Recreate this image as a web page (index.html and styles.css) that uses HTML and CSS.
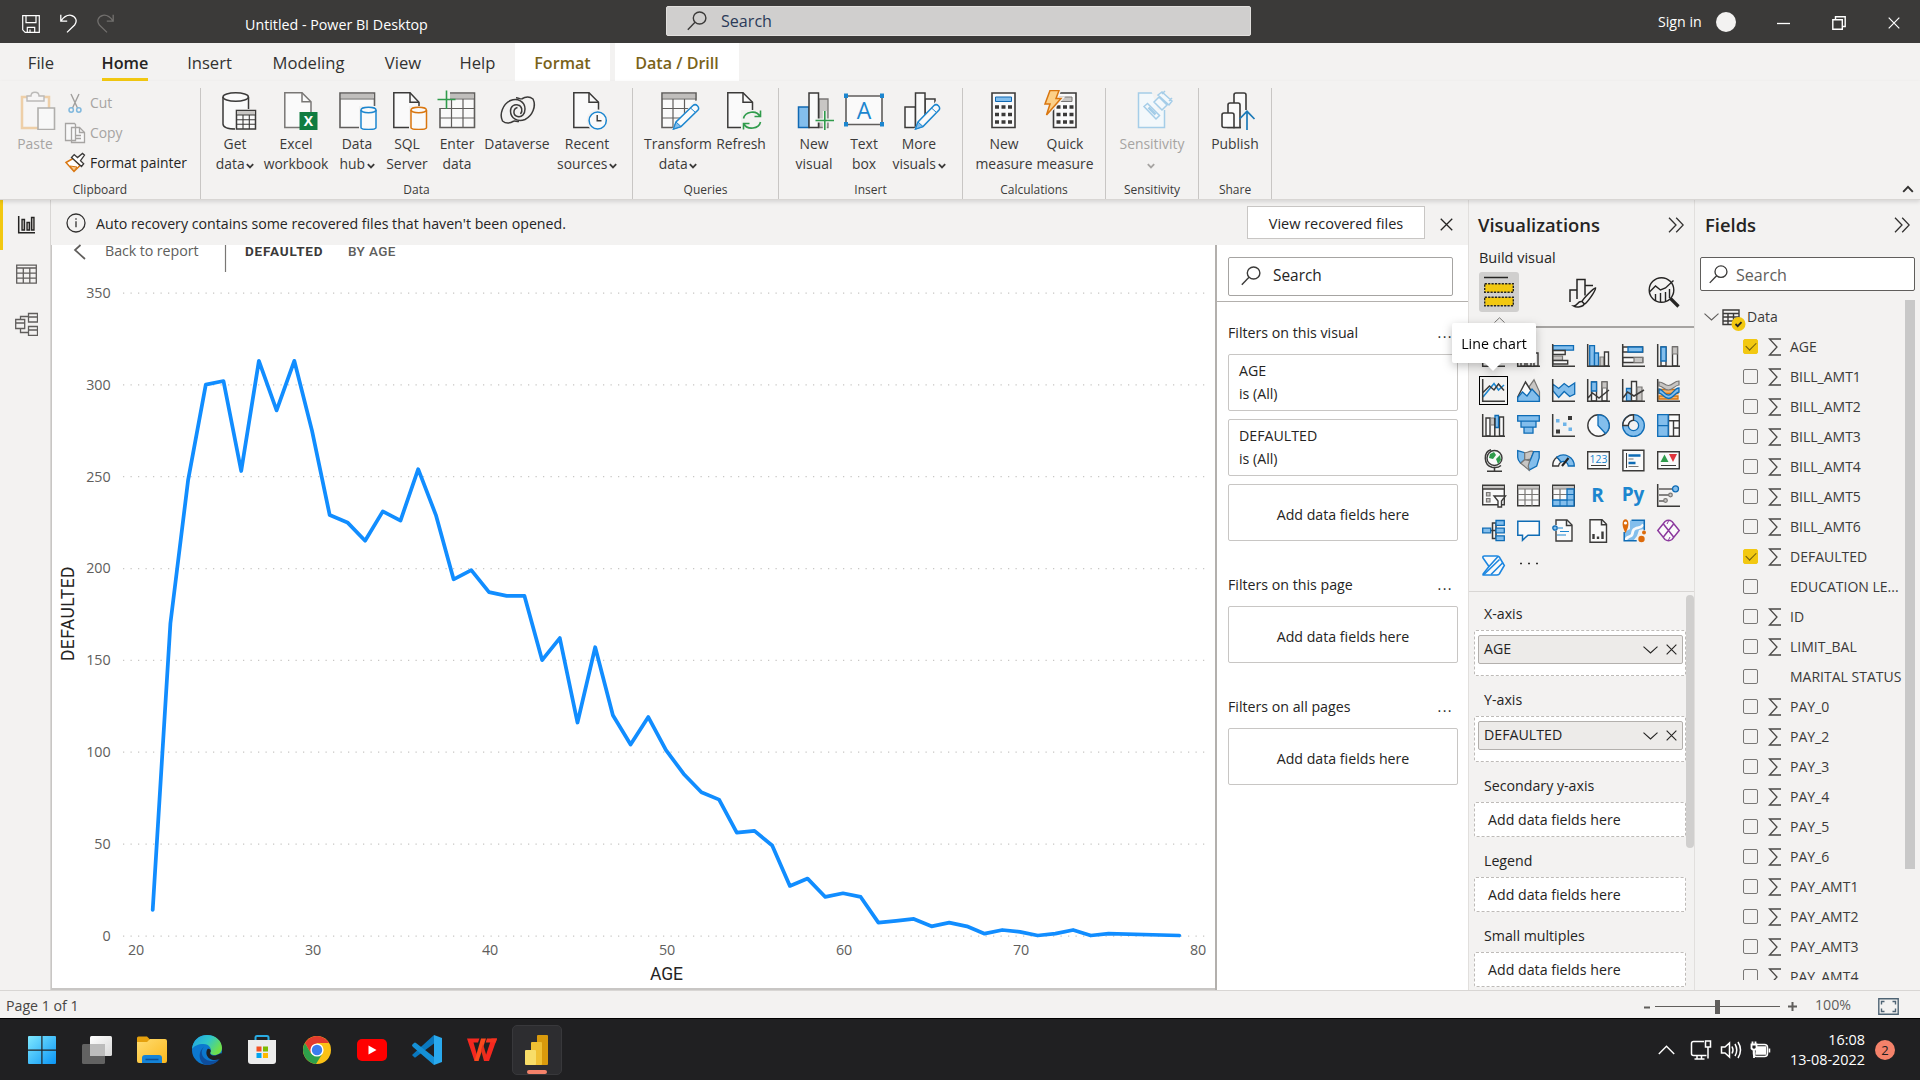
FILE: index.html
```html
<!DOCTYPE html>
<html lang="en">
<head>
<meta charset="utf-8">
<title>Untitled - Power BI Desktop</title>
<link rel="stylesheet" href="styles.css">
</head>
<body>
<svg class="defs" aria-hidden="true">
  <symbol id="sigma" viewBox="0 0 14 18"><path d="M13 1H1.5L9 9 1.5 17H13" fill="none" stroke="#4a4846" stroke-width="1.3"/></symbol>
  <symbol id="lens" viewBox="0 0 20 20"><g fill="none" stroke="#3b3a39" stroke-width="1.4"><ellipse cx="12.6" cy="7" rx="6.3" ry="6"/><path d="M8 11.3.8 18.8"/></g></symbol>
  <symbol id="drop" viewBox="0 0 8 6"><path d="M.8 1.2 4 4.4 7.2 1.2" fill="none" stroke="currentColor" stroke-width="1.8"/></symbol>
  <symbol id="collapse" viewBox="0 0 16 16"><path d="M1 .8 8 8l-7 7.2M8.2.8l7 7.2-7 7.2" fill="none" stroke="#323130" stroke-width="1.3"/></symbol>
  <symbol id="cross" viewBox="0 0 12 12"><path d="M.7.7l10.6 10.6M11.3.7.7 11.3" fill="none" stroke="currentColor" stroke-width="1.2"/></symbol>
  <symbol id="chev" viewBox="0 0 15 8"><path d="M.5.6 7.5 7l7-6.4" fill="none" stroke="currentColor" stroke-width="1.1"/></symbol>
</svg>

<header class="titlebar">
  <div class="quick">
    <svg width="18" height="18" viewBox="0 0 18 18" fill="none" stroke="#fff" stroke-width="1.2"><path d="M.7.7h16.6v16.6H3.2L.7 14.8zM4 .7v7h10v-7M5.3 17.3v-5h7.4v5M8 17v-2.6"/></svg>
    <svg width="17" height="19" viewBox="0 0 17 19" fill="none" stroke="#fff" stroke-width="1.3"><path d="M.8.8v6.400h6.400M1 7C4 2.500 7.500.8 11 1.300c5 .9 6.600 6 3.600 9.700L7 18.400"/></svg>
    <svg width="17" height="19" viewBox="0 0 17 19" fill="none" stroke="#72706e" stroke-width="1.3"><path d="M16.200.8v6.400H9.800M16 7C13 2.500 9.500.8 6 1.300c-5 .9-6.600 6-3.600 9.700L10 18.400"/></svg>
  </div>
  <div class="doc-title">Untitled - Power BI Desktop</div>
  <div class="top-search"><svg width="20" height="20"><use href="#lens"/></svg><span>Search</span></div>
  <div class="account"><span>Sign in</span><i class="avatar"></i></div>
  <div class="window-buttons">
    <svg width="13" height="14" viewBox="0 0 13 14"><path d="M0 7.500h13" stroke="#fff" stroke-width="1.3"/></svg>
    <svg width="14" height="14" viewBox="0 0 14 14" fill="none" stroke="#fff" stroke-width="1.4"><path d="M.8 3.700h9.500v9.500H.8zM3.500 3.500V.8h9.700v9.700h-2.700"/></svg>
    <svg width="12" height="12"><use href="#cross"/></svg>
  </div>
</header>

<nav class="tabs">
  <span>File</span><span class="active"><b>Home</b></span><span>Insert</span><span>Modeling</span><span>View</span><span>Help</span><span class="context">Format</span><i></i><span class="context">Data / Drill</span>
</nav>

<section class="ribbon">
  <div class="group g-clipboard">
    <div class="commands">
      <div class="cmd off w54">
        <svg width="54" height="40" viewBox="8 90 54 40" fill="none"><g opacity=".45"><path d="M22 97h27v31H22z" fill="#fafafa" stroke="#e8a552" stroke-width="2.5"/><path d="M27 101v-5h4c0-5 8-5 8 0h5v5z" fill="#fafafa" stroke="#797775" stroke-width="1.4"/></g><path d="M38 108h16.500v21.500H38z" fill="#f8f8f8" stroke="#b0aeac" stroke-width="1.6"/></svg>
        <span>Paste</span></div>
      <div class="small-cmds">
        <div class="off"><svg width="24" height="24" viewBox="64 91 24 24" fill="none"><path d="M71 94l6.500 14M79 94l-6.500 14" stroke="#a19f9d" stroke-width="1.4"/><circle cx="71.2" cy="110" r="2.2" stroke="#80b8dd" stroke-width="1.5"/><circle cx="78.8" cy="110" r="2.2" stroke="#80b8dd" stroke-width="1.5"/></svg>Cut</div>
        <div class="off"><svg width="24" height="24" viewBox="64 121 24 24" fill="#f8f8f8" stroke="#a6a4a2" stroke-width="1.3"><path d="M65.500 123.500h9l1 1v16h-10zM71.500 127.500h8l5 5v10h-13z"/><path d="M79.500 127.500v5h5M75 135.500h6M75 138.500h6" fill="none"/></svg>Copy</div>
        <div><svg width="24" height="24" viewBox="64 151 24 24" fill="none"><path d="M66 162.500l7-4 7 7-6 6z" fill="#fff" stroke="#d9760f" stroke-width="1.5"/><path d="M70 166l7 1-3 4z" fill="#f7c98f" stroke="#d9760f"/><path d="M71.500 157.500l10 9 2.200-2.800-3.200-3 4-5.500-2-1.800-5 4.200-3.300-3z" fill="#fff" stroke="#3b3a39" stroke-width="1.3"/></svg>Format painter</div>
      </div>
    </div>
    <div class="group-name">Clipboard</div>
  </div>

  <div class="group g-data">
    <div class="commands">
      <div class="cmd w54"><svg width="54" height="40" viewBox="208 90 54 40" fill="#fafafa" stroke="#3b3a39" stroke-width="1.5"><path d="M223 97v27c0 3 5 5 13 5V118h12.500V97"/><ellipse cx="235.7" cy="97" rx="12.7" ry="4.2"/><path d="M235 109h21v21h-21z" fill="#f3f2f1" stroke="none"/><path d="M236.500 110.500h19v18.500h-19z"/><path d="M237 111h18v4h-18z" fill="#c8c6c4" stroke="none"/><path d="M236.500 115h19M236.500 119.700h19M236.500 124.300h19M243 115v14M249.300 115v14" stroke-width="1.1"/></svg><span>Get<br>data <svg class="caret"><use href="#drop"/></svg></span></div>
      <div class="cmd w68"><svg width="68" height="40" viewBox="262 90 68 40"><path d="M284.800 92.800H302l9 9V127.500h-26.200z" fill="#fafafa" stroke="#797775" stroke-width="1.5"/><path d="M302 92.800v9h9" fill="none" stroke="#797775" stroke-width="1.5"/><path d="M299.500 112h18v18h-18z" fill="#107c41"/><text x="308.500" y="126" class="xl">X</text></svg><span>Excel<br>workbook</span></div>
      <div class="cmd w54"><svg width="54" height="40" viewBox="330 90 54 40"><path d="M340 93h34.500v34.500H340z" fill="#fafafa" stroke="#605e5c" stroke-width="1.6"/><path d="M341 94h32.500v4.500H341z" fill="#c0bebc"/><path d="M340 99h34.500" stroke="#605e5c" stroke-width="1.2"/><path d="M359 106h20v24h-20z" fill="#f3f2f1"/><path d="M361 110v17.500c0 2.600 15 2.600 15 0V110" fill="#fafafa" stroke="#1c86cf" stroke-width="1.5"/><ellipse cx="368.5" cy="110" rx="7.5" ry="2.7" fill="#fafafa" stroke="#1c86cf" stroke-width="1.5"/></svg><span>Data<br>hub <svg class="caret"><use href="#drop"/></svg></span></div>
      <div class="cmd w46"><svg width="46" height="40" viewBox="384 90 46 40"><path d="M393.800 92.800H410l9 9.500v25.200h-25.200z" fill="#fafafa" stroke="#3b3a39" stroke-width="1.5"/><path d="M410 92.800v9.500h9" fill="none" stroke="#3b3a39" stroke-width="1.5"/><path d="M409 106h20v24h-20z" fill="#f3f2f1"/><path d="M411 110v17.500c0 2.600 15.500 2.600 15.500 0V110" fill="#fafafa" stroke="#d9760f" stroke-width="1.5"/><ellipse cx="418.7" cy="110" rx="7.7" ry="2.7" fill="#fafafa" stroke="#d9760f" stroke-width="1.5"/></svg><span>SQL<br>Server</span></div>
      <div class="cmd w54"><svg width="54" height="40" viewBox="430 90 54 40"><path d="M440 93h34.500v34.500H440z" fill="#fafafa" stroke="#605e5c" stroke-width="1.6"/><path d="M447 94h27v4.500h-27z" fill="#c0bebc"/><path d="M440 99h34.500M440 108.500h34.500M440 118h34.500M451.500 99v28M463 99v28" fill="none" stroke="#605e5c" stroke-width="1.2"/><path d="M436 90h14v18h-14z" fill="#f3f2f1"/><path d="M437.500 99.500h18M446.500 90.500V109" stroke="#2f9b4b" stroke-width="1.6"/></svg><span>Enter<br>data</span></div>
      <div class="cmd w66"><svg width="66" height="40" viewBox="484 90 66 40" fill="none" stroke="#3b3a39" stroke-width="1.5"><path d="M521.500 99c4-2.500 8.500-2.500 11.500 0 3.500 7-.5 17-8 20.500-7 3-14.500-1-14.500-8.500 0-5 4-7 7.500-6 4 1 5 6 2.500 9"/><path d="M514 121c-4 2.500-8.500 2.500-11.500 0-3.500-7 .5-17 8-20.500 7-3 14.500 1 14.500 8.500 0 5-3 8.500-7.500 7.500-5-1-4.500-8 0-9"/><path d="M521.500 99c-2 0-3-1.300-5.500-1.300M514 121c2 0 3 .8 5 .5"/></svg><span>Dataverse</span></div>
      <div class="cmd w74"><svg width="74" height="40" viewBox="550 90 74 40"><path d="M573.800 92.800H589l9.500 9.500v25.200h-24.700z" fill="#fafafa" stroke="#3b3a39" stroke-width="1.5"/><path d="M589 92.800v9.500h9.500" fill="none" stroke="#3b3a39" stroke-width="1.5"/><circle cx="597.7" cy="120.5" r="11" fill="#f3f2f1"/><circle cx="597.7" cy="120.5" r="8.6" fill="#fafafa" stroke="#1c86cf" stroke-width="1.5"/><path d="M597.200 115v5.800h4.300" fill="none" stroke="#3b3a39" stroke-width="1.4"/></svg><span>Recent<br>sources <svg class="caret"><use href="#drop"/></svg></span></div>
    </div>
    <div class="group-name">Data</div>
  </div>

  <div class="group g-queries">
    <div class="commands">
      <div class="cmd w68"><svg width="68" height="40" viewBox="644 90 68 40"><path d="M662 93h34v34.500h-34z" fill="#fafafa" stroke="#605e5c" stroke-width="1.6"/><path d="M663 94h32v4.500h-32z" fill="#c0bebc"/><path d="M662 99h34M662 108.500h34M662 118h34M673 99v28M684.500 99v28" fill="none" stroke="#605e5c" stroke-width="1.2"/><path d="M697 130h-26l23-29 6-1v20z" fill="#f3f2f1"/><path d="M673.500 129l2.500-7 17-16.500c3-2.500 7 1.500 5 4.500l-17 16.500z" fill="#fafafa" stroke="#1c86cf" stroke-width="1.5"/><path d="M673.500 129l2.500-7 5 4.500z" fill="#83beec" stroke="#1c86cf"/><path d="M690.500 108l5 4.500" stroke="#1c86cf"/></svg><span>Transform<br>data <svg class="caret"><use href="#drop"/></svg></span></div>
      <div class="cmd w58"><svg width="58" height="40" viewBox="712 90 58 40"><path d="M727.800 92.800H743l9.500 9.500v25.200h-24.700z" fill="#fafafa" stroke="#3b3a39" stroke-width="1.5"/><path d="M743 92.800v9.500h9.500" fill="none" stroke="#3b3a39" stroke-width="1.5"/><path d="M741 110h22v20h-22z" fill="#f3f2f1"/><path d="M743.500 118.500c1.500-7 13-9 16.500-2M760.500 110.500v6h-6M760.500 122c-1.500 7-13 8.500-16.500 2M743.500 129.500v-6h6" fill="none" stroke="#2f9b4b" stroke-width="1.6"/></svg><span>Refresh</span></div>
    </div>
    <div class="group-name">Queries</div>
  </div>

  <div class="group g-insert">
    <div class="commands">
      <div class="cmd w50"><svg width="50" height="40" viewBox="789 90 50 40"><path d="M798.500 107h10.500v20.500h-10.500z" fill="#83beec" stroke="#1069b3" stroke-width="1.5"/><path d="M819 99h9v28.500h-9z" fill="#c8c6c4" stroke="#797775" stroke-width="1.3"/><path d="M809 93h9.500v34.500H809z" fill="#fafafa" stroke="#3b3a39" stroke-width="1.5"/><path d="M815.500 120.500h18.500M824.800 111v19" stroke="#f3f2f1" stroke-width="4"/><path d="M815.500 120.500h18.500M824.800 111v19" stroke="#2f9b4b" stroke-width="1.6"/></svg><span>New<br>visual</span></div>
      <div class="cmd w50"><svg width="50" height="40" viewBox="839 90 50 40"><path d="M846 96h36v28.500h-36z" fill="#fafafa" stroke="#605e5c" stroke-width="1.6"/><path d="M844 93.500h4v4.500h-4zM880 93.500h4v4.500h-4zM844 122h4v4.500h-4zM880 122h4v4.500h-4z" fill="#1c86cf"/><text x="864" y="118.500" class="tb">A</text></svg><span>Text<br>box</span></div>
      <div class="cmd w60"><svg width="60" height="40" viewBox="889 90 60 40"><path d="M905 107h10.500v20.500H905zM925 99h10v28.500h-10z" fill="#fafafa" stroke="#3b3a39" stroke-width="1.5"/><path d="M915.500 93h9.500v34.500h-9.500z" fill="#fafafa" stroke="#3b3a39" stroke-width="1.5"/><path d="M937 130h-24l23-29 5-1v20z" fill="#f3f2f1"/><path d="M915.500 129l2.500-7 16-16.500c3-2.500 7 1.500 5 4.500l-16 16.500z" fill="#fafafa" stroke="#1c86cf" stroke-width="1.5"/><path d="M915.500 129l2.500-7 5 4.500z" fill="#83beec" stroke="#1c86cf"/><path d="M931.500 108l5 4.500" stroke="#1c86cf"/></svg><span>More<br>visuals <svg class="caret"><use href="#drop"/></svg></span></div>
    </div>
    <div class="group-name">Insert</div>
  </div>

  <div class="group g-calc">
    <div class="commands">
      <div class="cmd w62"><svg width="62" height="40" viewBox="973 90 62 40"><path d="M992 93h23v34.500h-23z" fill="#fafafa" stroke="#3b3a39" stroke-width="1.6"/><path d="M995.500 97h16v4.500h-16z" fill="#83beec" stroke="#1069b3"/><path d="M995 107h17M995 114.500h17M995 122h17" stroke="#3b3a39" stroke-width="3.5" stroke-dasharray="4 2.5"/></svg><span>New<br>measure</span></div>
      <div class="cmd w60"><svg width="60" height="40" viewBox="1035 90 60 40"><path d="M1053.500 93h22.500v34.500h-22.500z" fill="#fafafa" stroke="#3b3a39" stroke-width="1.6"/><path d="M1058 97h14v4.500h-14z" fill="#c8c6c4" stroke="#797775"/><path d="M1056.500 107h17M1056.500 114.500h17M1056.500 122h17" stroke="#3b3a39" stroke-width="3.5" stroke-dasharray="4 2.5"/><path d="M1050 90.500h9l-3 8h5l-14.500 16.500 3.500-11h-5z" fill="#fcd998" stroke="#f3f2f1" stroke-width="4"/><path d="M1050 90.500h9l-3 8h5l-14.500 16.500 3.500-11h-5z" fill="#fcd088" stroke="#d9760f" stroke-width="1.5"/></svg><span>Quick<br>measure</span></div>
    </div>
    <div class="group-name">Calculations</div>
  </div>

  <div class="group g-sens">
    <div class="commands">
      <div class="cmd off w68"><svg width="68" height="40" viewBox="1118 90 68 40" fill="#f3f8fb" stroke="#a5cde8" stroke-width="1.5"><path d="M1138.500 93h26v34.500h-26z"/><path d="M1151 90h20v20h-13z" fill="#f3f2f1" stroke="none"/><path d="M1154 102l5-5 8 8-5 5zM1158 95l4-3 10 9-3 4zM1162 94l3-3M1169 101l3-3"/><path d="M1144 106.500l3.500-3 12 12-3.500 3.500z"/><path d="M1148.500 107.500l7 7" stroke-width="2.5"/></svg><span>Sensitivity<br><svg class="caret"><use href="#drop"/></svg></span></div>
    </div>
    <div class="group-name">Sensitivity</div>
  </div>

  <div class="group g-share">
    <div class="commands">
      <div class="cmd w60"><svg width="60" height="40" viewBox="1205 90 60 40" fill="#fafafa" stroke="#3b3a39" stroke-width="1.6"><path d="M1234 103v-8q0-2 2-2h8q2 0 2 2v32.500h-12z"/><path d="M1228 113v-8q0-2 2-2h8q2 0 2 2v22.500h-12z"/><path d="M1222 125v-10q0-2 2-2h8q2 0 2 2v12.500h-10q-2 0-2-2z"/><path d="M1241 110h12v20h-12z" fill="#f3f2f1" stroke="none"/><path d="M1247 130v-18.500M1239.500 119l7.500-7.700 7.500 7.700" fill="none" stroke="#1c7ab8" stroke-width="1.7"/></svg><span>Publish</span></div>
    </div>
    <div class="group-name">Share</div>
  </div>
  <svg class="ribbon-toggle" width="12" height="8" viewBox="0 0 12 8"><path d="M1.200 6.800 6 1.800l4.800 5" fill="none" stroke="#323130" stroke-width="1.9"/></svg>
</section>

<main class="work">
  <aside class="rail">
    <div class="rail-item current"><svg width="24" height="24" viewBox="14 213 24 24" fill="none" stroke="#252423" stroke-width="1.5"><path d="M18.700 216v16.800H35"/><path d="M22 219.500h2.500v10.500H22zM27 222.500h2.500v7.500H27zM31.500 217.500h2.500v12.500h-2.500z" stroke-width="1.3" fill="#b3b0ad"/></svg></div>
    <div class="rail-item"><svg width="24" height="24" viewBox="14 262.500 24 24" fill="none" stroke="#605e5c" stroke-width="1.3"><path d="M16.700 264.700h19.600v18H16.700zM16.700 267.500h19.600M16.700 272.700h19.600M16.700 277.700h19.600M23.300 267.500v15M29.800 267.500v15"/></svg></div>
    <div class="rail-item"><svg width="24" height="24" viewBox="14 312 24 24" fill="none" stroke="#605e5c" stroke-width="1.3"><path d="M15.700 319.500h9v9h-9zM15.700 323h9M28.500 313.500h9v8.500h-9zM28.500 317h9M28.500 326.500h9v9h-9zM28.500 330h9M20.500 319.500v-3h8M20.500 328.500v4h8"/></svg></div>
  </aside>

  <section class="center">
    <div class="notice">
      <svg width="20" height="20" viewBox="0 0 20 20" fill="none" stroke="#323130" stroke-width="1.3"><circle cx="10" cy="10" r="9"/><path d="M10 8.200v6M10 5.200v1.600"/></svg>
      <p>Auto recovery contains some recovered files that haven't been opened.</p>
      <button>View recovered files</button>
      <svg class="notice-close" width="13" height="13"><use href="#cross"/></svg>
    </div>
    <div class="stage">
      <div class="canvas">
        <svg class="chart" width="1163" height="743" viewBox="52 245 1163 743">
          <path d="M80.500 245l-5.500 5 10 9" fill="none" stroke="#605e5c" stroke-width="1.7"/>
          <text x="105" y="256" class="back" textLength="93.5">Back to report</text>
          <path d="M225.500 245v27" stroke="#797775" stroke-width="1.2"/>
          <text x="245" y="255.5" class="head strong" textLength="77.5">DEFAULTED</text>
          <text x="348" y="255.5" class="head" textLength="47.5">BY AGE</text>
          <g class="grid"><path d="M123 293h1085M123 384.900h1085M123 476.700h1085M123 568.600h1085M123 660.400h1085M123 752.200h1085M123 844.100h1085M123 936h1085"/></g>
          <g class="tick end">
            <text x="110.5" y="298">350</text><text x="110.5" y="389.8">300</text><text x="110.5" y="481.5">250</text><text x="110.5" y="573.3">200</text><text x="110.5" y="665">150</text><text x="110.5" y="757">100</text><text x="110.5" y="849">50</text><text x="110.5" y="940.5">0</text>
          </g>
          <g class="tick mid">
            <text x="136" y="955">20</text><text x="313" y="955">30</text><text x="490" y="955">40</text><text x="667" y="955">50</text><text x="844" y="955">60</text><text x="1021" y="955">70</text><text x="1198" y="955">80</text>
          </g>
          <text x="650" y="980" class="axis" textLength="33">AGE</text>
          <text transform="translate(74 661) rotate(-90)" class="axis" textLength="94.5">DEFAULTED</text>
          <g transform="translate(-219 935.500) scale(17.700 -1.836)"><polyline class="series" points="21,14 22,170 23,248 24,300 25,302 26,253 27,313 28,286 29,313 30,275 31,229 32,225 33,215 34,231 35,226 36,254 37,229 38,194 39,199 40,187 41,185 42,185 43,150 44,162 45,116 46,157 47,120 48,104 49,119 50,101 51,88 52,78 53,74 54,56 55,57 56,49 57,27 58,31 59,21 60,23 61,21 62,7 63,8 64,9 65,5 66,7 67,5 68,1 69,3 70,2 71,0 72,1 73,3 74,0 75,1 79,0"/></g>
        </svg>
      </div>
      <aside class="filters">
        <div class="filter-top"><div class="filter-search"><svg width="20" height="20"><use href="#lens"/></svg><span>Search</span></div></div>
        <section><h4>Filters on this visual<i>...</i></h4>
          <div class="card">AGE<br>is (All)</div><div class="card">DEFAULTED<br>is (All)</div><div class="card empty">Add data fields here</div></section>
        <section><h4>Filters on this page<i>...</i></h4><div class="card empty">Add data fields here</div></section>
        <section><h4>Filters on all pages<i>...</i></h4><div class="card empty">Add data fields here</div></section>
      </aside>
    </div>
  </section>

  <aside class="pane viz">
    <div class="pane-head"><h3>Visualizations</h3><svg width="16" height="16"><use href="#collapse"/></svg></div>
    <div class="build">Build visual</div>
    <div class="modes">
      <div class="mode on"><svg width="40" height="40" viewBox="0 0 40 40"><path d="M5 5.500h24" stroke="#252423" stroke-width="1.5"/><path d="M5.700 11.700h28.600v8.600H5.700zM5.700 25.200h28.600v8.600H5.700z" fill="#f2c811" stroke="#252423" stroke-width="1.4" stroke-dasharray="2.2 1.2"/></svg><svg class="up" width="11" height="6" viewBox="0 0 11 6"><path d="M.5 5.500l5-4.700 5 4.700" fill="none" stroke="#797775"/></svg></div>
      <div class="mode"><svg width="40" height="40" viewBox="1562 272 40 40" fill="none" stroke="#252423" stroke-width="1.5"><path d="M1570 302v-12h6.500M1577 299v-19.500h8v16M1585 285.500h8"/><path d="M1595.500 288c-2 0-13 11.500-13.500 13.500l2.500 2.500c2.500-1 11.500-13.500 11-16zM1581.500 301.500c-4-.5-4 4.500-8 4.500 3 2 10 1 11-2.500"/></svg></div>
      <div class="mode"><svg width="40" height="40" viewBox="1644 272 40 40" fill="none" stroke="#252423" stroke-width="1.4"><circle cx="1661.5" cy="290" r="12.3"/><path d="M1649.500 292l6-6 5 4 5-2 8-7.500M1655.500 301v-7M1660.500 302v-9M1665.500 301v-9M1669.500 298v-9"/><path d="M1670.500 298.500l8 8" stroke-width="3.2"/></svg></div>
    </div>
    <div class="gallery">
      <svg viewBox="0 0 23 23"><path class="ax" d="M.7 0v22.300H23"/><path class="b" d="M1.500 2h12v4h-12z"/></svg>
      <svg viewBox="0 0 23 23"><path class="ax" d="M.7 0v22.300H23"/><path class="w" d="M4 12h4v10H4zM10 6h4v16h-4zM17 9h4v13h-4z"/></svg>
      <svg viewBox="0 0 23 23"><path class="b" d="M.7 1.700h20.800v4.500H.7z"/><path class="w" d="M.7 6.500h12.500v4H.7z"/><path class="g" d="M.7 12h9.800v4.300H.7z"/><path class="w" d="M.7 16.500h15v3.500H.7z"/><path class="ax" d="M.7 0v22.300H23"/></svg>
      <svg viewBox="0 0 23 23"><path class="b" d="M2.700 1.700h4.800v20.500H2.700z"/><path class="b" d="M7.500 9h4v13h-4z"/><path class="g" d="M13 13h4v9h-4z"/><path class="w" d="M17.500 8h4v14h-4z"/><path class="ax" d="M.7 0v22.300H23"/></svg>
      <svg viewBox="0 0 23 23"><path class="w" d="M.7 3h20v5h-20zM.7 13.500h20v5h-20z"/><path class="b" d="M6 3h14.500v5H6z"/><path class="g" d="M12 13.500h8.700v5H12z"/><path class="ax" d="M.7 0v22.300H23"/></svg>
      <svg viewBox="0 0 23 23"><path class="w" d="M4 3h5v19H4zM15.500 3h5v19h-5z"/><path class="b" d="M4 3h5v14H4z"/><path class="g" d="M15.500 3h5v7h-5z"/><path class="ax" d="M.7 0v22.300H23"/></svg>

      <svg class="picked" viewBox="0 0 23 23"><path d="M1 18l11-13.500 4.500 6.500 5.500-5" fill="none" stroke="#1c86cf" stroke-width="1.6"/><path class="ax" d="M1 13.500l6.500-6.500 4.500 4 4.500-6 5.500 6.500M.7 0v22.300H23"/></svg>
      <svg viewBox="0 0 23 23"><path class="g" d="M9 12 17 .8l5.500 12v9.500H15z"/><path class="w" d="M.7 18 8.500 3l7 11-7 8.300H.7z"/><path class="b" d="M.7 22.300V18.500l4.800-5.500 4.500 4 5-7 7.300 8v4.300z"/></svg>
      <svg viewBox="0 0 23 23"><path class="b" d="M.7 5l6 4.500 5.500-5 4.500 3.500 6-4v11l-5 2.500-5.500-5-5.500 6-6-7z"/><path class="ax" d="M.7 0v22.300H23"/></svg>
      <svg viewBox="0 0 23 23"><path class="w" d="M4.500 3h5v19h-5zM15 3h5v19h-5z"/><path class="b" d="M4.500 3h5v9h-5z"/><path class="g" d="M15 3h5v6h-5z"/><path class="ax" d="M1 19l4.500-5 6.500 5 10-8M.7 0v22.300H23"/></svg>
      <svg viewBox="0 0 23 23"><path class="b" d="M4.500 9.500h5V22h-5z"/><path class="w" d="M9.500 2.500h5V22h-5z"/><path class="g" d="M15 8h5v14h-5z"/><path class="ax" d="M1 19l4.500-6 6.500 4 10-6M.7 0v22.300H23"/></svg>
      <svg viewBox="0 0 23 23"><path d="M2 10.500h19v4H2zM2 17h19v3H2z" fill="#f3b36e" stroke="#d9760f" stroke-width="1.3"/><path class="g" d="M2 3c5 0 5 3.500 9.500 3.500S17 2 22 2v4c-4 0-6 5-10.500 5S6 7 2 7z"/><path class="b" d="M2 10c4 0 5 6 9.500 6S17 9 22 9v4c-3 0-6 6.500-10.500 6.500S5 14 2 14z"/><path class="ax" d="M.7 0v22.300H23"/></svg>

      <svg viewBox="0 0 23 23"><path class="w" d="M4 4h4v18H4zM17.500 3h4v19h-4z"/><path class="g" d="M8.500 4h4v7h-4z"/><path class="b" d="M13 1.500h3.500v12H13z"/><path class="ax" d="M.7 0v22.300H23M12.800 4v18"/></svg>
      <svg viewBox="0 0 23 23"><path class="b" d="M.7 1.700h21.600v5.500H.7zM4 7.200h15v6H4zM7 13.200h9v6H7z"/></svg>
      <svg viewBox="0 0 23 23"><path d="M16 2h4v4h-4zM4 15.500h4v4H4z" fill="#3b3a39"/><path d="M4 5h3.500v3.500H4zM11 8.500h3.500V12H11zM16.500 13.500H20V17h-3.500z" fill="#6db3e8"/><path class="ax" d="M.7 0v22.300H23"/></svg>
      <svg viewBox="0 0 23 23"><circle class="w" cx="11.5" cy="11.5" r="10.7"/><path class="b" d="M11 .8v10.700l7.500 8A10.700 10.700 0 0 0 11 .8z"/></svg>
      <svg viewBox="0 0 23 23"><circle cx="11.5" cy="11.5" r="8" fill="none" stroke="#0f6cb5" stroke-width="7"/><circle cx="11.5" cy="11.5" r="8" fill="none" stroke="#83beec" stroke-width="4.4"/><path class="w" d="M11.500.8v5.500a5.200 5.200 0 0 0-5.200 5.200H.8A10.700 10.700 0 0 1 11.500.8z"/></svg>
      <svg viewBox="0 0 23 23"><path class="w" d="M11.500.7h10.800v6H11.500zM11.500 6.700h5v15.500h-5zM16.500 6.700h5.800V14h-5.800zM16.500 14h5.800v8.300h-5.800z"/><path class="b" d="M.7.7h10.500v11H.7zM.7 11.700h10.500v10.600H.7z"/></svg>

      <svg viewBox="0 0 23 23"><circle class="w" cx="12.5" cy="9" r="7.5"/><path d="M8 5l4-2 2 3-3 4-4-1zM14 10l4-4 1 5-3 4z" fill="#2f9b4b"/><path class="ax" d="M9 .8C1 3 1.500 16 10 18.200c4 .8 7 0 9-1.700M12.500 19v3.200M5 22.300h15"/></svg>
      <svg viewBox="0 0 23 23"><path class="b" d="M.7 1.700l7 2v7l-4 3.500c-2-2-3-3-3-6z"/><path class="g" d="M7.700 3.700c3 .5 5-3 9-1l-3 7.500-6 1z"/><path class="b" d="M16.700 2.700h5.500V9l-2.500 8-7.500 4-2-4 3.500-6.800z"/><path class="g" d="M3.700 14.200l4-3.500 5 1-1.500 5.500 1 4z"/></svg>
      <svg viewBox="0 0 23 23"><path class="w" d="M.7 17A11 11 0 0 1 5 8l4 5a6 6 0 0 0-2.500 4z"/><path class="b" d="M5 8a11 11 0 0 1 17.300 9h-6a5 5 0 0 0-7.300-4z"/><path d="M10 17l6.500-8" stroke="#252423" stroke-width="2.2"/></svg>
      <svg viewBox="0 0 23 23"><path class="w" d="M.7 2.700h21.600v17H.7z"/><text x="11.5" y="14" class="n123">123</text><path class="ax thin" d="M4 16.500h15"/></svg>
      <svg viewBox="0 0 23 23"><path class="w" d="M.9 1.200h21v20.600h-21z"/><path d="M4.500 4v15" stroke="#3b3a39"/><path d="M6.500 6.500h12M6.500 14h7" stroke="#0f6cb5" stroke-width="2.4"/><path d="M6.500 10h5M6.500 17.500h10" stroke="#797775" stroke-width="1.2"/></svg>
      <svg viewBox="0 0 23 23"><path class="w" d="M.7 2.700h21.600v17H.7z"/><path d="M3.500 13 7.500 5.500l4 7.500z" fill="#2f9b4b"/><path d="M12 5h8l-4 8z" fill="#e0343c"/><path class="ax thin" d="M4 16.500h15"/></svg>

      <svg viewBox="0 0 23 23"><path class="w" d="M.7 1.200h21.600v19.600H.7z"/><path d="M1.500 2h20v2.800h-20z" fill="#c8c6c4"/><path class="g" d="M4.500 8.500h3.500V12H4.500zM4.500 14.500h3.500V18H4.500z"/><path class="ax" d="M.7 5h21.600"/><path class="w" d="M12 12h11.500l-4 5v6h-3.500v-6z"/></svg>
      <svg viewBox="0 0 23 23"><path class="w" d="M.7 1.200h21.600v20.600H.7z"/><path d="M1.500 2h20v2.800h-20z" fill="#c8c6c4"/><path class="th" d="M.7 5h21.600M.7 10.500h21.600M.7 16h21.600M8 5v17M15 5v17"/></svg>
      <svg viewBox="0 0 23 23"><path class="w" d="M.7 1.200h21.600v20.600H.7z"/><path d="M1.500 2h20v2.800h-20z" fill="#c8c6c4"/><path class="th" d="M.7 5h21.600M.7 10.500h21.600M8 5v17"/><path class="b" d="M15 5h7v17H.7v-6H15z"/><path d="M15 10.500h7M15 16h7M8 16v6M15 16v6" stroke="#0f6cb5"/></svg>
      <svg viewBox="0 0 23 23"><text x="10.5" y="18" class="lang">R</text></svg>
      <svg viewBox="0 0 23 23"><text x="11" y="16.500" class="lang">Py</text></svg>
      <svg viewBox="0 0 23 23"><path d="M2 5h14M2 11h10M2 17h5" stroke="#605e5c" stroke-width="1.4"/><circle class="b" cx="18.5" cy="4.8" r="3"/><circle class="g" cx="13.5" cy="11" r="1.8"/><circle class="g" cx="8.5" cy="16.5" r="1.8"/><path class="ax" d="M.7 0v22.300H23"/></svg>

      <svg viewBox="0 0 23 23"><path class="ax" d="M8 11.500h6M14 4v15.500M10.500 11.500V4h4M10.500 11.500v8h4"/><path class="b" d="M.7 9.200h8v4.600h-8zM14 1.500h8.300v4.800H14zM14 9.200h8.300v4.600H14zM14 16.800h8.300v4.800H14z"/></svg>
      <svg viewBox="0 0 23 23"><path d="M.8 2.200h21.500v14H11l-5.500 5v-5H.8z" fill="#fafafa" stroke="#0f6cb5" stroke-width="1.5"/></svg>
      <svg viewBox="0 0 23 23"><path class="w" d="M4 6V1h11l5 5v16H4V12"/><path class="ax" d="M14.500 1v5.500H20"/><circle class="b" cx="3" cy="9" r="2.200"/><path d="M6 9h5M8 12.500h9M5 16h9" stroke="#1c86cf" stroke-width="1.2"/></svg>
      <svg viewBox="0 0 23 23"><path class="w" d="M3 .8h12l4.500 4.500v18H3z"/><path class="ax" d="M14.500.8v5h5"/><path d="M6.500 15v5M11 17.500V20M15.500 12.500V20" stroke="#3b3a39" stroke-width="2.4"/></svg>
      <svg viewBox="0 0 23 23"><path d="M8 1.500h14V10l-5 1-2 6-4 5H2.500v-9L8 10z" fill="#83beec"/><path d="M3.500 22c.5-5 4-3.500 6-5.500s0-6 4-7c3-1 5 0 8-4" fill="none" stroke="#fafafa" stroke-width="2.8"/><path d="M2.200 13v8.800h12.500M9.500 1.200h12.800v10" fill="none" stroke="#0f6cb5" stroke-width="1.5"/><path d="M3.500 12.500C-4-3 11-3 3.500 12.500z" fill="#dd6b0c" stroke="#dd6b0c" stroke-width="1.5"/><circle cx="3.5" cy="4" r="1.6" fill="#fff"/><circle cx="19.5" cy="20" r="3.2" fill="#dd6b0c"/><circle cx="22" cy="13.5" r="2" fill="#dd6b0c"/></svg>
      <svg viewBox="0 0 23 23" fill="#fafafa" stroke="#8c3a9e" stroke-width="1.5"><path d="M.8 11.500 8 2.500q3.500-2.500 7 0l7.200 9L15 20.500q-3.500 2.500-7 0zM6 4.500l11 14M17 4.500l-11 14"/><path d="M11.500 2l-1.500 3M11.500 21l1.500-3" stroke-width="1"/></svg>

      <svg viewBox="0 0 23 23" fill="#fafafa" stroke="#1c86e0" stroke-width="1.6"><path d="M.8 3q0-1 1.500-1h12.500q1.500 0 2.500 1l5 8.500-5 8.500q-1 1-2.500 1H1.500q-1 0 0-1.500L7 12.500 1 4z"/><path d="M7 12.500 16 2.500M2 20.500l15.500-15M9 20.500l12-12"/></svg>
      <svg viewBox="0 0 23 23"><path d="M3 9.500h2M11 9.500h2M19 9.500h2" stroke="#323130" stroke-width="1.6"/></svg>
    </div>
    <div class="wells">
      <div class="well-list">
        <label>X-axis</label>
        <div class="well filled"><div class="chip"><span>AGE</span><svg width="15" height="8"><use href="#chev"/></svg><svg width="11" height="11"><use href="#cross"/></svg></div></div>
        <label>Y-axis</label>
        <div class="well filled"><div class="chip"><span>DEFAULTED</span><svg width="15" height="8"><use href="#chev"/></svg><svg width="11" height="11"><use href="#cross"/></svg></div></div>
        <label>Secondary y-axis</label><div class="well">Add data fields here</div>
        <label>Legend</label><div class="well">Add data fields here</div>
        <label>Small multiples</label><div class="well">Add data fields here</div>
      </div>
      <div class="well-scroll"></div>
    </div>
    <div class="tooltip">Line chart</div>
  </aside>

  <aside class="pane fields">
    <div class="pane-head"><h3>Fields</h3><svg width="16" height="16"><use href="#collapse"/></svg></div>
    <div class="field-search"><svg width="19" height="19"><use href="#lens"/></svg><span>Search</span></div>
    <div class="tree-wrap">
      <ul class="tree">
        <li class="table"><svg width="15" height="8"><use href="#chev"/></svg><svg width="26" height="26" viewBox="1720 303 26 26"><path d="M1723 309h16v14.500h-16zM1723 312.500h16M1723 316h16M1723 320h16M1728 312v11.500M1733.500 312v11.500" fill="none" stroke="#3b3a39" stroke-width="1.4"/><circle cx="1738.5" cy="323" r="7" fill="#f2c811"/><path d="M1735.500 323l2.200 2.200 3.800-4" fill="none" stroke="#252423" stroke-width="1.8"/></svg>Data</li>
        <li><i class="box checked"></i><svg><use href="#sigma"/></svg>AGE</li>
        <li><i class="box"></i><svg><use href="#sigma"/></svg>BILL_AMT1</li>
        <li><i class="box"></i><svg><use href="#sigma"/></svg>BILL_AMT2</li>
        <li><i class="box"></i><svg><use href="#sigma"/></svg>BILL_AMT3</li>
        <li><i class="box"></i><svg><use href="#sigma"/></svg>BILL_AMT4</li>
        <li><i class="box"></i><svg><use href="#sigma"/></svg>BILL_AMT5</li>
        <li><i class="box"></i><svg><use href="#sigma"/></svg>BILL_AMT6</li>
        <li><i class="box checked"></i><svg><use href="#sigma"/></svg>DEFAULTED</li>
        <li><i class="box"></i><svg></svg>EDUCATION LE...</li>
        <li><i class="box"></i><svg><use href="#sigma"/></svg>ID</li>
        <li><i class="box"></i><svg><use href="#sigma"/></svg>LIMIT_BAL</li>
        <li><i class="box"></i><svg></svg>MARITAL STATUS</li>
        <li><i class="box"></i><svg><use href="#sigma"/></svg>PAY_0</li>
        <li><i class="box"></i><svg><use href="#sigma"/></svg>PAY_2</li>
        <li><i class="box"></i><svg><use href="#sigma"/></svg>PAY_3</li>
        <li><i class="box"></i><svg><use href="#sigma"/></svg>PAY_4</li>
        <li><i class="box"></i><svg><use href="#sigma"/></svg>PAY_5</li>
        <li><i class="box"></i><svg><use href="#sigma"/></svg>PAY_6</li>
        <li><i class="box"></i><svg><use href="#sigma"/></svg>PAY_AMT1</li>
        <li><i class="box"></i><svg><use href="#sigma"/></svg>PAY_AMT2</li>
        <li><i class="box"></i><svg><use href="#sigma"/></svg>PAY_AMT3</li>
        <li><i class="box"></i><svg><use href="#sigma"/></svg>PAY_AMT4</li>
      </ul>
      <div class="tree-scroll"></div>
    </div>
  </aside>
</main>

<footer class="status">
  <span class="page-no">Page 1 of 1</span>
  <svg width="156" height="28" viewBox="1642 990 156 28"><path d="M1644 1006.500h6M1788 1005.500h9M1792.500 1001v9" stroke="#605e5c" stroke-width="2"/><path d="M1655 1005.500h125" stroke="#605e5c"/><path d="M1715 999h5v14h-5z" fill="#605e5c"/></svg>
  <span class="percent">100%</span>
  <svg width="21" height="17" viewBox="0 0 21 17" fill="none" stroke="#4f6474" stroke-width="1.4"><path d="M.8.8h19.400v15.400H.8z"/><path d="M3.500 6.500v-3h3M14.500 3.500h3v3M17.500 10.500v3h-3M6.500 13.500h-3v-3"/></svg>
</footer>

<footer class="taskbar">
  <div class="apps">
    <div><svg width="30" height="30" viewBox="0 0 30 30"><defs><linearGradient id="win" x1="0" y1="0" x2="1" y2="1"><stop offset="0" stop-color="#7fe9ff"/><stop offset="1" stop-color="#0a95f5"/></linearGradient></defs><path d="M2 1h12.300v13.500H1V2q0-1 1-1zM15.500 1H28q1 0 1 1v12.500H15.500zM1 15.700h13.300V29H2q-1 0-1-1zM15.500 15.700H29V28q0 1-1 1H15.500z" fill="url(#win)"/></svg></div>
    <div><svg width="30" height="30" viewBox="0 0 30 30"><defs><linearGradient id="tv" x1="0" y1="0" x2="1" y2="1"><stop offset="0" stop-color="#fff"/><stop offset="1" stop-color="#d8d8d8"/></linearGradient></defs><rect x="0" y="9" width="23" height="20" rx="1.5" fill="#626262"/><rect x="8" y="1" width="22" height="20" rx="1.5" fill="url(#tv)"/><path d="M8 9h15v12H8z" fill="#bcbcbc"/></svg></div>
    <div><svg width="30" height="30" viewBox="0 0 30 30"><defs><linearGradient id="fo" x1="0" y1="0" x2="1" y2="1"><stop offset="0" stop-color="#ffdc70"/><stop offset="1" stop-color="#fbb81d"/></linearGradient></defs><path d="M0 3q0-1.500 1.500-1.500h8.500l3 3V9H0z" fill="#e5a00d"/><path d="M0 7h10l3-3h15q2 0 2 2v20q0 2-2 2H2q-2 0-2-2z" fill="url(#fo)"/><path d="M5 28v-5q0-3 3-3h14q3 0 3 3v5z" fill="#1583d7"/><path d="M8.500 24.500h13" stroke="#0b4f94" stroke-width="1.5"/></svg></div>
    <div><svg width="30" height="30" viewBox="0 0 30 30"><defs><linearGradient id="ed" x1="0" y1="0" x2="1" y2=".5"><stop offset="0" stop-color="#1f9fe6"/><stop offset=".55" stop-color="#30c7c9"/><stop offset="1" stop-color="#6fe04a"/></linearGradient></defs><circle cx="15" cy="15" r="15" fill="#0c78cf"/><path d="M0 14C1 5 7 0 15 0c9 0 15 6 15 13 0 4-3 7-7 7-3 0-5.500-1-4.500-3 1.500-3-1-8-7-8C6 9 2 11 0 14z" fill="url(#ed)"/><path d="M12 12c-5 5-1 14 8 14 3 0 6-1 8-2.500C25 28 20 30 15 30 7 29 5 17 12 12z" fill="#0e4d9c"/><path d="M18.500 17c-1.500 2.500 2 4 5 3.500l6-2.500 1 4-3 2c-9 4-16-4-12-10 2-1 4 1 3 3z" fill="#202022"/></svg></div>
    <div><svg width="30" height="30" viewBox="0 0 30 30"><path d="M8.500 7V2.500Q8.500 1 10 1h10q1.500 0 1.500 1.500V7" fill="none" stroke="#29abe2" stroke-width="2"/><path d="M1 5h28v21q0 3-3 3H4q-3 0-3-3z" fill="#ececec"/><path d="M9.500 11.500h5v5h-5z" fill="#f25022"/><path d="M16 11.500h5v5h-5z" fill="#7fba00"/><path d="M9.500 18h5v5h-5z" fill="#00a4ef"/><path d="M16 18h5v5h-5z" fill="#ffb900"/></svg></div>
    <div><svg width="28" height="28" viewBox="0 0 28 28"><circle cx="14" cy="14" r="14" fill="#fbc116"/><path d="M1.900 7a14 14 0 0 1 24.200 0H14L8 17.500z" fill="#e33b2e"/><path d="M1.900 7A14 14 0 0 0 13 28l6.500-10.500L14 20 8 17.500z" fill="#2da04b"/><circle cx="14" cy="14" r="6.6" fill="#fff"/><circle cx="14" cy="14" r="5.2" fill="#3b7ded"/></svg></div>
    <div><svg width="30" height="22" viewBox="0 0 30 22"><rect width="30" height="22" rx="5" fill="#f00"/><path d="M11.500 6.500l8 4.500-8 4.500z" fill="#fff"/></svg></div>
    <div><svg width="30" height="30" viewBox="0 0 30 30"><path d="M22 0l8 3v24l-8 3z" fill="#29a9ee"/><path d="M0 20 22 0v8.500L4 22q-1 1-2 0z" fill="#0a78bf"/><path d="M0 10l2-2q1-1 2 0l18 14v8L1 12q-1-1-1-2z" fill="#1590d6"/></svg></div>
    <div><svg width="30" height="24" viewBox="0 0 30 24"><path d="M0 .5h12.500L11 4.500H6.500L10 17l1.500 6h-4z" fill="#f5281f"/><path d="M14 .5h5l-7.500 22.500H7.500z" fill="#fb4a1e"/><path d="M16 6l5 17h-4L14 12z" fill="#e8301c"/><path d="M30 .5h-5.500L17 23h5z" fill="#f5281f"/><path d="M20 .5h10l-1.200 4H18.700z" fill="#f5331f"/></svg></div>
    <div class="running"><svg width="24" height="30" viewBox="0 0 24 30"><rect x="12" width="11" height="30" rx="1" fill="#d99a0c"/><rect x="6" y="7" width="11" height="23" rx="1" fill="#f0c033"/><rect x="0" y="15" width="11" height="15" rx="1" fill="#f8dd68"/></svg><i></i></div>
  </div>
  <div class="tray">
    <svg width="17" height="10" viewBox="0 0 17 10"><path d="M.8 9l7.700-7.700L16.200 9" fill="none" stroke="#fff" stroke-width="1.4"/></svg>
    <svg width="84" height="24" viewBox="1689 1038 84 24" fill="none" stroke="#fff" stroke-width="1.5"><path d="M1704 1041.500h-10.500q-2 0-2 2v10q0 2 2 2h13M1694.500 1059h10M1697 1055.500v3.500M1701.500 1055.500v3.500M1705.500 1041h5v6h-5zM1708 1047v11.500"/><path d="M1721.500 1047h3.500l4.500-4v14l-4.500-4h-3.500zM1732 1046.500q2 3.500 0 7M1735 1044q3.500 6 0 12M1738 1042q5 8 0 16"/><path d="M1756 1044.500h8.500q3 0 3 3v6q0 3-3 3h-8q-3 0-3-3v-3M1769.500 1048.500v4"/><path d="M1757 1047h8.500v7h-9.500z" fill="#fff"/><path d="M1751.500 1044.500h5v4q-2.500 2.500-5 0zM1752.500 1041.500v3M1755.500 1041.500v3M1754 1050v8" stroke-width="1.8"/></svg>
    <div class="clock">16:08<br>13-08-2022</div>
    <b>2</b>
  </div>
</footer>
</body>
</html>
```
FILE: styles.css
```css
* { box-sizing: border-box; }
body {
  margin: 0;
  width: 1920px;
  height: 1080px;
  overflow: hidden;
  display: grid;
  grid-template-rows: 43px 38px 119px 790px 28px 62px;
  background: #f3f2f1;
  color: #252423;
  font: 14.2px/20px "Open Sans", "Noto Sans", sans-serif;
}
h3, h4, p, ul { margin: 0; padding: 0; font-weight: 400; }
i { font-style: normal; }
svg { flex: none; display: block; }
.defs { position: absolute; width: 0; height: 0; }

/* title bar */
.titlebar { display: flex; align-items: center; background: #3b3a39; color: #fff; }
.quick { display: flex; align-items: center; gap: 20px; width: 245px; padding: 4px 0 0 22px; }
.doc-title { width: 421px; padding-top: 6px; font-size: 14.25px; }
.top-search { display: flex; align-items: center; gap: 14px; width: 585px; height: 30px; margin-bottom: 1px; padding-left: 20px; border: 1px solid #e1dfdd; border-radius: 2px; background: #d0cfce; color: #2b3a58; font-size: 16.1px; }
.account { display: flex; align-items: center; gap: 14px; margin-left: 407px; }
.avatar { width: 20px; height: 20px; border-radius: 50%; background: #f3f2f1; }
.window-buttons { display: flex; align-items: center; gap: 42px; margin-left: 41px; padding-top: 3px; }

/* ribbon tabs */
.tabs { display: grid; grid-template-columns: 82px 86px 83px 115px 74px 75px 95px 5px 124px; font-size: 16.6px; line-height: 40px; height: 38px; text-align: center; color: #323130; }
.tabs b { display: inline-block; height: 38px; border-bottom: 3px solid #f2c811; font-weight: 600; font-size: 16.2px; color: #252423; vertical-align: top; }
.tabs .context { background: #fff; color: #7a6219; font-weight: 600; font-size: 16.1px; height: 38px; }

/* ribbon */
.ribbon { display: flex; padding-top: 7px; border-bottom: 1px solid #d8d6d4; box-shadow: 0 2px 4px rgba(0,0,0,.12); position: relative; z-index: 2; font-size: 13.9px; }
.group { display: flex; flex-direction: column; height: 111px; border-right: 1px solid #c8c6c4; }
.commands { display: flex; height: 94px; padding-top: 2px; }
.group-name { padding-top: 2px; font-size: 12px; line-height: 18px; text-align: center; color: #3b3a39; }
.g-clipboard { width: 201px; } .g-clipboard .commands { padding-left: 8px; }
.g-data { width: 432px; } .g-data .commands { padding-left: 7px; }
.g-queries { width: 146px; } .g-queries .commands { padding-left: 11px; }
.g-insert { width: 184px; } .g-insert .commands { padding-left: 10px; }
.g-calc { width: 143px; } .g-calc .commands { padding-left: 10px; }
.g-sens { width: 93px; } .g-sens .commands { padding-left: 12px; }
.g-share { width: 73px; } .g-share .commands { padding-left: 6px; }
.cmd { display: flex; flex-direction: column; align-items: center; gap: 4px; white-space: nowrap; text-align: center; color: #3b3a39; }
.w46 { width: 46px; } .w50 { width: 50px; } .w54 { width: 54px; } .w58 { width: 58px; } .w60 { width: 60px; }
.w62 { width: 62px; } .w66 { width: 66px; } .w68 { width: 68px; } .w74 { width: 74px; }
.off { color: #a6a4a2; }
.caret { display: inline-block; width: 8px; height: 6px; margin-left: -2px; vertical-align: 0; }
.small-cmds { margin: -2px 0 0 2px; }
.small-cmds div { display: flex; align-items: center; gap: 2px; height: 30px; white-space: nowrap; }
.ribbon-toggle { margin: 97px 6px 0 auto; }
.xl { font: 700 14px "Open Sans", sans-serif; fill: #fff; text-anchor: middle; }
.tb { font: 23px "Open Sans", sans-serif; fill: #1c86cf; text-anchor: middle; }

/* work area */
.work { display: grid; grid-template-columns: 51px 1417px 226px 226px; min-height: 0; }
.rail { border-right: 1px solid #d8d6d4; }
.rail-item { display: flex; align-items: center; height: 49px; padding-left: 14px; }
.rail-item.current { border-left: 3px solid #f2c811; padding-left: 11px; height: 50px; }
.center { display: flex; flex-direction: column; }
.notice { display: flex; align-items: center; height: 45px; padding-left: 15px; }
.notice p { width: 1151px; margin: 3px 0 0 10px; }
.notice button { width: 178px; height: 33px; padding: 2px 0 0; border: 1px solid #c8c6c4; background: #fff; color: #252423; font: 14.5px "Open Sans", sans-serif; }
.notice-close { margin: 3px 0 0 15px; }
.stage { display: flex; height: 745px; }
.canvas { width: 1164px; border-left: 1px solid #c8c6c4; border-bottom: 2px solid #c8c6c4; background: #fff; }
.chart { overflow: visible; }
.back { font-size: 14.25px; fill: #605e5c; }
.head { font: 500 13.5px Roboto, sans-serif; fill: #605e5c; }
.strong { font-weight: 700; fill: #3b3a39; }
.grid path { stroke: #c8c6c4; stroke-width: 1.25; stroke-dasharray: 1.25 6.25; fill: none; }
.tick { font-size: 14.3px; fill: #605e5c; letter-spacing: -.1px; }
.end { text-anchor: end; } .mid { text-anchor: middle; }
.axis { font: 17.5px Roboto, sans-serif; fill: #252423; }
.series { fill: none; stroke: #118dff; stroke-width: 3.75px; stroke-linejoin: round; stroke-linecap: round; vector-effect: non-scaling-stroke; }

/* filter pane */
.filters { width: 253px; height: 745px; border-left: 2px solid #b3b0ad; background: #fff; }
.filter-top { height: 57px; padding: 12px 0 0 11px; border-bottom: 1px solid #b3b0ad; }
.filter-search { display: flex; align-items: center; gap: 12px; width: 225px; height: 39px; padding: 0 0 1px 12px; border: 1px solid #a6a4a2; border-radius: 2px; font-size: 15.4px; }
.filters section { display: flex; flex-direction: column; gap: 8px; padding: 20px 10px 0 11px; }
.filters section + section { padding-top: 33px; }
.filters h4 { display: flex; justify-content: space-between; height: 24px; padding-right: 5px; line-height: 22px; }
.filters h4 i { letter-spacing: 1.4px; line-height: 22px; }
.card { height: 57px; padding: 4px 10px; border: 1px solid #c8c6c4; border-radius: 2px; line-height: 23.3px; }
.card.empty { display: flex; align-items: center; justify-content: center; padding-top: 8px; }

/* side panes */
.pane { position: relative; border-left: 1px solid #e1dfdd; min-width: 0; }
.pane-head { display: flex; justify-content: space-between; align-items: center; height: 50px; padding: 0 10px 0 9px; }
.pane-head h3 { font-size: 18.4px; font-weight: 600; }
.pane-head svg { margin-top: -1px; }
.build { height: 16px; padding-left: 10px; line-height: 15px; font-size: 14.5px; }
.modes { display: flex; justify-content: space-between; height: 62px; padding: 6px 10px 0; border-bottom: 2px solid #a6a4a2; }
.mode { width: 40px; height: 40px; }
.mode.on { border-radius: 3px; background: #d0cfce; }
.up { margin: 5px auto 0; }
.gallery { display: grid; grid-template-columns: repeat(6, 35px); grid-auto-rows: 35px; height: 264px; padding: 16px 0 0 13px; border-bottom: 1px solid #d8d6d4; }
.gallery svg { width: 23px; height: 23px; overflow: visible; }
.picked { outline: 1.5px solid #000; outline-offset: 2.5px; }
.ax { fill: none; stroke: #3b3a39; stroke-width: 1.5; }
.thin { stroke-width: 1; }
.th { fill: none; stroke: #797775; stroke-width: 1.2; }
.w { fill: #fafafa; stroke: #3b3a39; stroke-width: 1.4; }
.b { fill: #83beec; stroke: #0f6cb5; stroke-width: 1.3; }
.g { fill: #c8c6c4; stroke: #797775; stroke-width: 1.2; }
.n123 { font: 10.5px "Open Sans", sans-serif; fill: #1c86cf; text-anchor: middle; }
.lang { font: 700 19px "Open Sans", sans-serif; fill: #1c86cf; text-anchor: middle; }
.wells { display: flex; height: 398px; overflow: hidden; }
.well-list { width: 217px; padding: 12px 0 0 5px; }
.well-list label { display: block; height: 20px; margin: 0 0 6px 10px; line-height: 19px; }
.well { height: 35px; margin-bottom: 14px; padding: 7px 0 0 13px; width: 212px; border: 1px dashed #bebbb8; border-radius: 2px; background: #fff; }
.well.filled { height: 46px; padding: 4px 2px 0 3px; }
.chip { display: flex; align-items: center; gap: 8px; height: 29px; padding: 0 5px; border: 1px solid #b3b0ad; border-radius: 2px; background: #edebe9; color: #252423; }
.chip span { flex: 1; margin-top: -1px; }
.well-scroll { width: 8px; height: 253px; margin-top: 3px; border-radius: 4px; background: #d0cfce; }
.tooltip { position: absolute; left: -17px; top: 123px; width: 84px; height: 40px; border-radius: 2px; background: #fff; color: #000; line-height: 41px; text-align: center; filter: drop-shadow(0 3px 5px rgba(0,0,0,.25)); z-index: 3; }
.tooltip::after { content: ""; position: absolute; left: 33px; top: 40px; border: 8px solid transparent; border-top-color: #fff; border-bottom: 0; }

/* fields */
.fields .pane-head { padding-left: 10px; }
.field-search { display: flex; align-items: center; gap: 8px; width: 215px; height: 34px; margin: 7px 0 10px 5px; padding: 1px 0 0 8px; border: 1px solid #605e5c; border-radius: 2px; background: #fff; color: #605e5c; font-size: 16.1px; }
.tree-wrap { display: flex; height: 679px; padding-right: 5px; }
.tree { flex: 1; height: 679px; padding-top: .5px; overflow: hidden; list-style: none; font-size: 14px; color: #3b3a39; white-space: nowrap; }
.tree li { display: flex; align-items: center; height: 30px; padding-left: 48px; line-height: 21px; }
.tree li svg { width: 14px; height: 18px; margin: 0 8px 0 10px; }
.tree li.table { padding-left: 9px; }
.tree li.table svg { width: 15px; height: 8px; margin: 0; color: #605e5c; }
.tree li.table svg + svg { width: 26px; height: 26px; margin: 0 1px 0 1px; overflow: visible; }
.box { width: 15px; height: 15px; border: 1px solid #797775; border-radius: 2px; }
.box.checked { border-color: #f2c811; background: #f2c811; }
.box.checked::after { content: ""; display: block; width: 9px; height: 5px; margin: 2px 0 0 2px; border: solid #6b5a10; border-width: 0 0 1.3px 1.3px; transform: rotate(-45deg); }
.tree-scroll { width: 10px; height: 569px; margin-top: -1px; background: #c8c8c8; }

/* status bar */
.status { display: flex; align-items: center; border-top: 1px solid #d8d6d4; color: #484644; }
.page-no { width: 1636px; margin: 2px 0 0 6px; }
.percent { width: 64px; padding-left: 17px; color: #605e5c; }
.status .percent + svg { margin: 3px 0 0 16px; }

/* taskbar */
.taskbar { display: flex; justify-content: space-between; align-items: center; padding-top: 1px; border-top: 1px solid #000; background: #202022; }
.apps { display: flex; padding-left: 14px; }
.apps div { display: flex; align-items: center; justify-content: center; width: 55px; height: 50px; }
.apps .running { position: relative; width: 50px; margin-left: 3px; border: 1px solid #38383b; border-radius: 5px; background: #2d2d30; }
.running i { position: absolute; left: 14px; bottom: 0; width: 20px; height: 4px; border-radius: 2px; background: #f4826a; }
.tray { display: flex; align-items: center; color: #fff; }
.tray > svg + svg { margin-left: 14px; }
.clock { width: 92px; text-align: right; font-size: 14.4px; }
.tray b { width: 20px; height: 20px; margin: 0 25px 0 10px; border-radius: 50%; background: #f4826a; color: #202020; font-weight: 400; font-size: 13px; text-align: center; }
```
